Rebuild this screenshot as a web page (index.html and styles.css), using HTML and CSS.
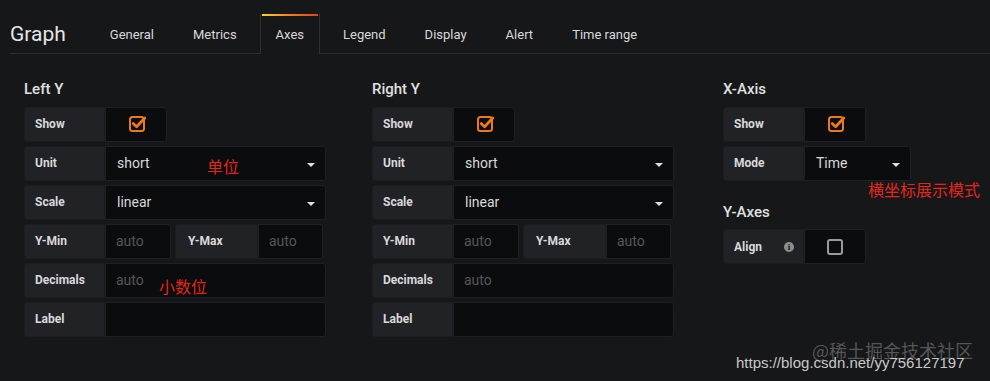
FILE: index.html
```html
<!doctype html>
<html lang="en">
 <head>
  <meta charset="UTF-8">
  <title>Graph - Axes</title>
  <link rel="stylesheet" href="styles.css">
 </head>
 <body>
  <div class="header">
   <h2 class="title">Graph</h2>
   <ul class="tabs">
    <li>General</li>
    <li>Metrics</li>
    <li class="active">Axes</li>
    <li>Legend</li>
    <li>Display</li>
    <li>Alert</li>
    <li>Time range</li>
   </ul>
  </div>

  <div class="editor">
   <!-- Left Y -->
   <section class="group group-left">
    <h5>Left Y</h5>
    <div class="row">
     <label class="lbl">Show</label>
     <div class="check"><svg width="18" height="17" viewBox="0 0 18 17"><rect x="1" y="2" width="14" height="14" rx="2.5" fill="none" stroke="#eb7b18" stroke-width="2"/><path d="M4.2 8.6 L7.6 11.8 L15.8 3" fill="none" stroke="#eb7b18" stroke-width="2.8" stroke-linecap="round" stroke-linejoin="round"/></svg></div>
    </div>
    <div class="row">
     <label class="lbl">Unit</label>
     <div class="select w221">short<span class="caret"></span></div>
    </div>
    <div class="row">
     <label class="lbl">Scale</label>
     <div class="select w221">linear<span class="caret"></span></div>
    </div>
    <div class="row">
     <label class="lbl">Y-Min</label>
     <div class="input w66">auto</div>
     <label class="lbl lbl-max">Y-Max</label>
     <div class="input w65">auto</div>
    </div>
    <div class="row">
     <label class="lbl">Decimals</label>
     <div class="input w221">auto</div>
    </div>
    <div class="row">
     <label class="lbl">Label</label>
     <div class="input w221"></div>
    </div>
    <span class="note note-unit">单位</span>
    <span class="note note-dec">小数位</span>
   </section>

   <!-- Right Y -->
   <section class="group group-right">
    <h5>Right Y</h5>
    <div class="row">
     <label class="lbl">Show</label>
     <div class="check"><svg width="18" height="17" viewBox="0 0 18 17"><rect x="1" y="2" width="14" height="14" rx="2.5" fill="none" stroke="#eb7b18" stroke-width="2"/><path d="M4.2 8.6 L7.6 11.8 L15.8 3" fill="none" stroke="#eb7b18" stroke-width="2.8" stroke-linecap="round" stroke-linejoin="round"/></svg></div>
    </div>
    <div class="row">
     <label class="lbl">Unit</label>
     <div class="select w221">short<span class="caret"></span></div>
    </div>
    <div class="row">
     <label class="lbl">Scale</label>
     <div class="select w221">linear<span class="caret"></span></div>
    </div>
    <div class="row">
     <label class="lbl">Y-Min</label>
     <div class="input w66">auto</div>
     <label class="lbl lbl-max">Y-Max</label>
     <div class="input w65">auto</div>
    </div>
    <div class="row">
     <label class="lbl">Decimals</label>
     <div class="input w221">auto</div>
    </div>
    <div class="row">
     <label class="lbl">Label</label>
     <div class="input w221"></div>
    </div>
   </section>

   <!-- X-Axis / Y-Axes -->
   <section class="group group-x">
    <h5>X-Axis</h5>
    <div class="row">
     <label class="lbl">Show</label>
     <div class="check"><svg width="18" height="17" viewBox="0 0 18 17"><rect x="1" y="2" width="14" height="14" rx="2.5" fill="none" stroke="#eb7b18" stroke-width="2"/><path d="M4.2 8.6 L7.6 11.8 L15.8 3" fill="none" stroke="#eb7b18" stroke-width="2.8" stroke-linecap="round" stroke-linejoin="round"/></svg></div>
    </div>
    <div class="row">
     <label class="lbl">Mode</label>
     <div class="select w107">Time<span class="caret"></span></div>
    </div>
    <h5 class="sub">Y-Axes</h5>
    <div class="row">
     <label class="lbl lbl-info">Align<span class="info">i</span></label>
     <div class="check"><span class="box"></span></div>
    </div>
    <span class="note note-mode">横坐标展示模式</span>
   </section>
  </div>

  <div class="watermark">
   <span class="wm-cn">@稀土掘金技术社区</span>
   <span class="wm-url">https://blog.csdn.net/yy756127197</span>
  </div>
 </body>
</html>
```

FILE: styles.css
```css
body {
    margin: 0;
    background: #161719;
    color: #d8d9da;
    font-family: Roboto, "Noto Sans CJK SC", sans-serif;
    height: 381px;
    overflow: hidden;
    position: relative;
}

.header {
    display: flex;
    align-items: flex-end;
    height: 53px;
    margin-left: 10px;
    border-bottom: 1px solid #2c2d30;
}

.title {
    margin: 0 29px 0 0;
    font-size: 21px;
    font-weight: 400;
    line-height: 38px;
    color: #e6e6e6;
}

.tabs {
    display: flex;
    list-style: none;
    margin: 0;
    padding: 0;
}

.tabs li {
    height: 37px;
    line-height: 37px;
    padding: 0 15px;
    margin-right: 9px;
    font-size: 13px;
    color: #d8d9da;
    border-top: 2px solid transparent;
}

.tabs li.active {
    margin-bottom: -1px;
    height: 38px;
    padding: 0 14px;
    border-left: 1px solid #2f3034;
    border-right: 1px solid #2f3034;
    border-image: linear-gradient(90deg, #f9d423 0%, #f0801a 50%, #e2431a 100%) 2 0 0 0;
    border-top: 2px solid;
    background: #161719;
    box-shadow: -1px 0 0 #2f3034, 1px 0 0 #2f3034;
}

.editor {
    display: flex;
    padding: 25px 0 0 24px;
}

.group {
    position: relative;
}

.group-left {
    width: 348px;
}

.group-right {
    width: 351px;
}

h5 {
    margin: 0 0 8px 0;
    font-size: 15px;
    font-weight: 500;
    line-height: 20px;
    color: #e0e0e0;
}

h5.sub {
    margin: 21px 0 7px 0;
}

.row {
    display: flex;
    height: 35px;
    margin-bottom: 4px;
}

.lbl {
    box-sizing: border-box;
    width: 81px;
    height: 35px;
    line-height: 33px;
    padding-left: 10px;
    background: #212226;
    border: 1px solid #1c1d20;
    border-radius: 3px 0 0 3px;
    font-size: 12px;
    font-weight: 700;
    color: #d8d9da;
}

.lbl-max {
    width: 83px;
    margin-left: 4px;
    padding-left: 12px;
}

.lbl-info {
    display: flex;
    align-items: center;
    justify-content: space-between;
    padding-right: 9px;
    line-height: normal;
}

.info {
    width: 10px;
    height: 10px;
    border-radius: 50%;
    background: #8e8e8e;
    color: #212226;
    font-size: 8px;
    font-weight: 700;
    line-height: 10px;
    text-align: center;
    font-family: "DejaVu Serif", serif;
}

.check,
.input,
.select {
    box-sizing: border-box;
    height: 35px;
    background: #0b0c0e;
    border: 1px solid #1f2023;
    border-radius: 0 3px 3px 0;
}

.check {
    width: 62px;
    display: flex;
    align-items: center;
    justify-content: center;
}

.check svg {
    margin-left: 3px;
    margin-bottom: 2px;
}

.box {
    width: 12px;
    height: 12px;
    border: 2px solid #9a9a9a;
    border-radius: 3px;
}

.input {
    line-height: 33px;
    padding-left: 10px;
    font-size: 14px;
    color: #55575b;
}

.select {
    display: flex;
    align-items: center;
    justify-content: space-between;
    padding: 0 10px 1px 11px;
    font-size: 14px;
    color: #d8d9da;
    line-height: 1;
}

.caret {
    width: 0;
    height: 0;
    border-left: 4px solid transparent;
    border-right: 4px solid transparent;
    border-top: 4px solid #e0e0e0;
    margin-top: 3px;
}

.w221 { width: 221px; }
.w107 { width: 107px; }
.w66 { width: 66px; }
.w65 { width: 65px; }

.note {
    position: absolute;
    font-family: "Noto Sans CJK SC", sans-serif;
    font-size: 16px;
    line-height: 18px;
    color: #e3261c;
}

.note-unit {
    left: 183px;
    top: 78px;
}

.note-dec {
    left: 135px;
    top: 198px;
}

.note-mode {
    left: 145px;
    top: 101px;
    white-space: nowrap;
}

.watermark {
    position: absolute;
    right: 12px;
    bottom: 8px;
    width: 242px;
    height: 30px;
}

.wm-cn {
    position: absolute;
    right: 5px;
    top: -2px;
    font-family: "Noto Sans CJK SC", sans-serif;
    font-size: 18px;
    line-height: 18px;
    color: rgba(150, 150, 150, 0.5);
    white-space: nowrap;
}

.wm-url {
    position: absolute;
    left: 0;
    bottom: 2px;
    font-family: "Liberation Sans", Arial, sans-serif;
    font-size: 15px;
    line-height: 16px;
    color: #c9c9c9;
    white-space: nowrap;
}
```
